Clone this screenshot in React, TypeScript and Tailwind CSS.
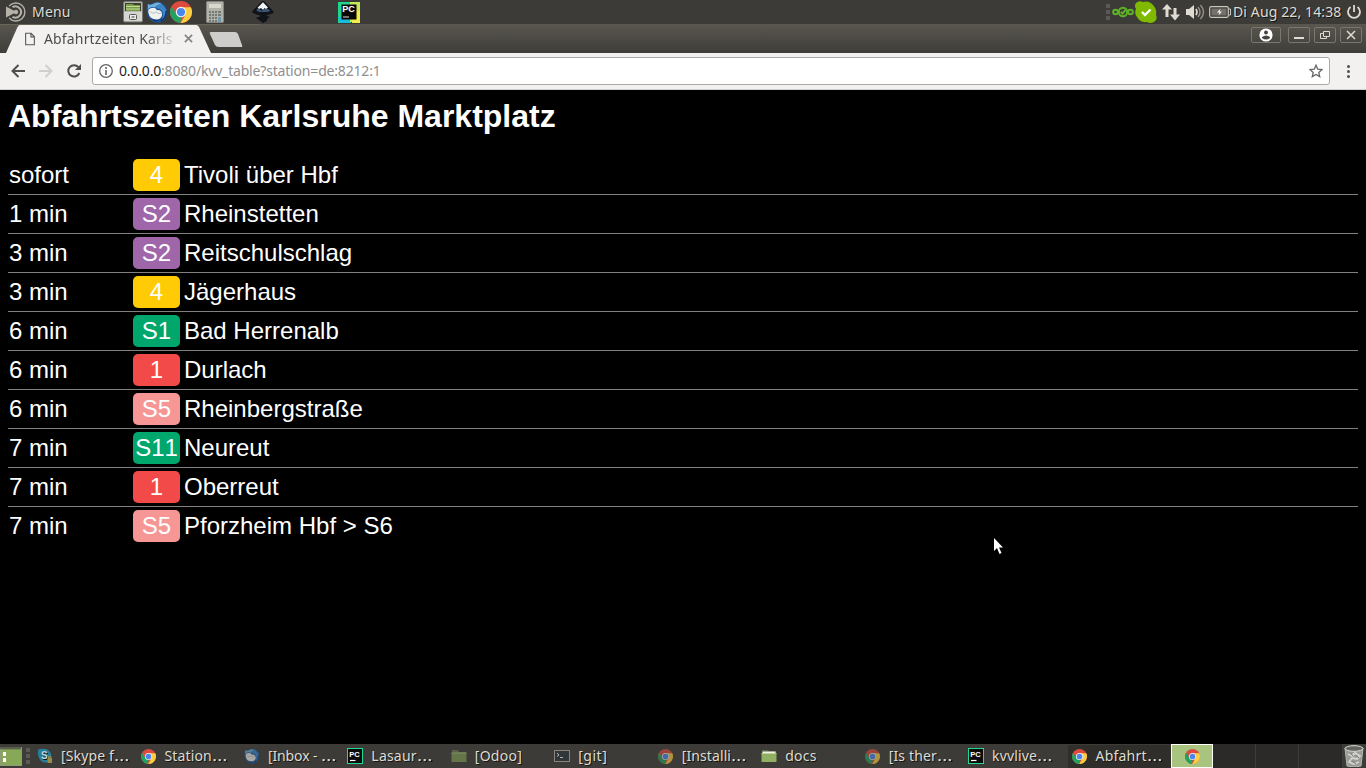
import React from "react";

const departures = [
  { time: "sofort", line: "4", color: "bg-[#ffcb05]", to: "Tivoli über Hbf" },
  { time: "1 min", line: "S2", color: "bg-[#a066aa]", to: "Rheinstetten" },
  { time: "3 min", line: "S2", color: "bg-[#a066aa]", to: "Reitschulschlag" },
  { time: "3 min", line: "4", color: "bg-[#ffcb05]", to: "Jägerhaus" },
  { time: "6 min", line: "S1", color: "bg-[#00a76d]", to: "Bad Herrenalb" },
  { time: "6 min", line: "1", color: "bg-[#f14a48]", to: "Durlach" },
  { time: "6 min", line: "S5", color: "bg-[#f69795]", to: "Rheinbergstraße" },
  { time: "7 min", line: "S11", color: "bg-[#00a76d] [font-kerning:none]", to: "Neureut" },
  { time: "7 min", line: "1", color: "bg-[#f14a48]", to: "Oberreut" },
  { time: "7 min", line: "S5", color: "bg-[#f69795]", to: "Pforzheim Hbf > S6" },
];

function Chrome({ className = "" }: { className?: string }) {
  return (
    <svg viewBox="0 0 24 24" className={className}>
      <circle cx="12" cy="12" r="12" fill="#dd4b3e" />
      <path d="M1.6 6L7.2 14.8L12 17.2L11.5 24A12 12 0 0 1 1.6 6Z" fill="#22a15f" />
      <path d="M12 6.7H22.8A12 12 0 0 1 11.5 24L17 14.6Z" fill="#fdce41" />
      <circle cx="12" cy="12" r="5.7" fill="#f4f4f4" />
      <circle cx="12" cy="12" r="4.5" fill="#4a86ee" />
    </svg>
  );
}

function PyCharm() {
  return (
    <svg viewBox="0 0 16 16" className="h-4 w-4">
      <rect width="16" height="16" fill="#20d995" />
      <rect x="1" y="1" width="14" height="14" fill="#0b0b0d" />
      <text x="2.3" y="8.6" fontSize="7.5" fontWeight="700" fill="#fff" fontFamily="Liberation Sans, sans-serif">PC</text>
      <path d="M3 12.5h5.5" stroke="#fff" strokeWidth="1.2" />
    </svg>
  );
}

function Thunderbird({ className = "" }: { className?: string }) {
  return (
    <svg viewBox="0 0 24 24" className={className}>
      <path d="M2 3Q4 4 6 3Q11 0 17 2Q23 5 23 12Q23 20 17 23Q12 25 7 22Q1 18 1 12Q0 7 2 3Z" fill="#1c5296" />
      <path d="M2 3Q4 5 8 3Q14 0 18 4Q12 3 10 7Q5 5 2 10Z" fill="#6fb0dc" />
      <path d="M11 6Q14 2 19 5Q23 9 22 15Q20 21 17 21Q20 14 17 10Q15 8 11 8Z" fill="#3d86c6" />
      <path d="M3 14Q1 10 5 8Q10 6 12 10Q15 9 17 12Q19 17 14 20Q8 21 5 18Q3 16 3 14Z" fill="#f1f1ee" />
      <path d="M4 11Q7 15 11 12Q14 15 17 13" fill="none" stroke="#aab6c2" />
      <path d="M5 18Q9 22 15 20Q13 23 9 22Z" fill="#123a78" />
      <path d="M22 11Q22 19 16 22" fill="none" stroke="#102f66" strokeWidth="1.5" />
    </svg>
  );
}

function Folder() {
  return (
    <svg viewBox="0 0 16 16" className="h-4 w-4">
      <path d="M1 2h6l1 1h7v4H1z" fill="#58664a" />
      <path d="M1.5 3.5h13v3h-13z" fill="#f2f2e9" />
      <path d="M.5 5.5h15V14H.5z" fill="#91b064" />
      <path d="M.5 5.5h15" stroke="#b9d392" />
    </svg>
  );
}

function DimFolder() {
  return (
    <svg viewBox="0 0 16 16" className="h-4 w-4">
      <path d="M1 2h6l1 2h7v10H1z" fill="#59614c" />
      <path d="M.5 5h15v9H.5z" fill="#647548" />
      <path d="M.5 5h15" stroke="#849265" />
    </svg>
  );
}

function Terminal() {
  return (
    <svg viewBox="0 0 16 16" className="h-4 w-4">
      <rect x=".5" y="2.5" width="15" height="11" fill="#30363a" stroke="#85857e" />
      <path d="M3 5l2 2-2 1.5M6 9.5h3" fill="none" stroke="#b4b4ae" />
    </svg>
  );
}

function SkypeSmall() {
  return (
    <svg viewBox="0 0 16 16" className="h-4 w-4">
      <path d="M1 3Q1 0 5 1Q10 0 13 4Q15 6 14 9Q16 15 11 14Q5 16 2 10Q0 6 1 3Z" fill="#267e9b" />
      <text x="4" y="11" fontSize="10" fontWeight="700" fill="#b8d5dc" fontFamily="Liberation Sans, sans-serif">S</text>
      <path d="M10.5 10h4.5v5h-4.5z" fill="#9c8a48" />
      <path d="M11.5 10V8.5h2.5V10" fill="none" stroke="#9c8a48" />
    </svg>
  );
}

const tasks = [
  { label: "[Skype f", cut: true, icon: <SkypeSmall />, style: "tracking-[0.15px]" },
  { label: "Station", cut: true, icon: <Chrome className="h-[15px] w-[15px]" />, style: "tracking-[0.15px]" },
  { label: "[Inbox - ", cut: true, icon: <Thunderbird className="h-4 w-4 opacity-60" />, style: "tracking-[-0.1px]" },
  { label: "Lasaur", cut: true, icon: <PyCharm />, style: "tracking-[0.2px]" },
  { label: "[Odoo]", icon: <DimFolder />, style: "tracking-[0.25px]" },
  { label: "[git]", icon: <Terminal />, style: "tracking-[0.5px]" },
  { label: "[Installi", cut: true, icon: <Chrome className="h-[15px] w-[15px] opacity-60" />, style: "tracking-[0.1px]" },
  { label: "docs", icon: <Folder />, style: "tracking-[0.3px]" },
  { label: "[Is ther", cut: true, icon: <Chrome className="h-[15px] w-[15px] opacity-60" />, style: "tracking-[0.15px]" },
  { label: "kvvlive", cut: true, icon: <PyCharm />, style: "tracking-[0.15px]" },
  { label: "Abfahrt", cut: true, icon: <Chrome className="h-[15px] w-[15px]" />, style: "tracking-[0.2px]", active: true },
];

function Grip() {
  return (
    <div className="flex w-1 flex-col gap-[2px]">
      <span className="h-1 bg-[#5a5955]" />
      <span className="h-1 bg-[#5a5955]" />
      <span className="h-1 bg-[#5a5955]" />
    </div>
  );
}

function TopPanel() {
  return (
    <header className="flex h-6 items-center bg-[#3c3b37] text-[14px] text-[#dfdbd2] [text-shadow:1px_1px_#171613]">
      <svg viewBox="0 0 20 20" className="ml-[6px] h-5 w-5 shrink-0" fill="none" stroke="#b5b2aa">
        <path d="M3.2 4A9 9 0 1 1 3.2 16" strokeWidth="1.4" />
        <path d="M6.5 5.2A5.6 5.6 0 1 1 6.5 14.8" strokeWidth="2" />
        <path d="M0 4.5L10.5 10L0 15.5Z" fill="#b5b2aa" stroke="none" />
        <circle cx="10" cy="10" r="2.2" fill="#b5b2aa" stroke="none" />
      </svg>
      <span className="ml-[6px] w-[91px] shrink-0 pb-[2px] tracking-[0.2px]">Menu</span>
      <svg viewBox="0 0 20 22" className="h-[22px] w-5 shrink-0">
        <rect x=".5" y=".5" width="19" height="20.5" rx="1.5" fill="#b8b8b3" stroke="#777774" />
        <path d="M2 2h16v8H2z" fill="#3b4030" />
        <path d="M3 3h7l1 1h6v6H3z" fill="#779c43" />
        <path d="M3 5.5h14M3 8h14" stroke="#c9d9a0" />
        <path d="M1 11h18v9H1z" fill="#d5d5d1" />
        <rect x="6.5" y="13.5" width="7" height="5" rx="1" fill="#eee" stroke="#555" />
        <path d="M8.5 16h3" stroke="#333" />
      </svg>
      <Thunderbird className="ml-[3px] h-[22px] w-[22px] shrink-0" />
      <Chrome className="ml-[2px] h-[22px] w-[22px] shrink-0" />
      <svg viewBox="0 0 18 22" className="ml-[14px] h-[22px] w-[18px] shrink-0">
        <rect x=".5" y=".5" width="17" height="21" rx="1" fill="#b2b2aa" stroke="#868681" />
        <path d="M3 3h12v4H3z" fill="#d7d9ce" />
        <path d="M3 11h2m1 0h2m1 0h2m1 0h3M3 14h2m1 0h2m1 0h2m1 0h3M3 17h2m1 0h2m1 0h2m1 0h3M3 20h2m1 0h2m1 0h2" stroke="#717a74" strokeWidth="2" />
        <path d="M13.5 16v5" stroke="#6e99aa" strokeWidth="3" />
      </svg>
      <svg viewBox="0 0 22 22" className="ml-[28px] h-[22px] w-[22px] shrink-0">
        <path d="M11 0Q12 0 13 1L21 10Q23 12 19 13L14 14.5L18 16L15 18L15 20L11 22L7 19L4 17L9 15L2 12.5Q-1 11 1 9.5L9 1Q10 0 11 0Z" fill="#10131a" />
        <path d="M11 1.2L16 6.5L14 8L12.5 7L11 9L9 7L7 8L5.5 6.8Z" fill="#f0f3f5" />
        <path d="M4 9L6 7.5L8 8.5L10 10L12 8L16 8L18.5 10L15 11H7Z" fill="#3c5475" />
      </svg>
      <svg viewBox="0 0 22 22" className="ml-[64px] h-[22px] w-[22px] shrink-0">
        <path d="M0 1h13v21H0z" fill="#20d68f" />
        <path d="M12 1h10v20H12z" fill="#c5e957" />
        <path d="M0 16h12v6H2z" fill="#17bce0" />
        <path d="M14 10h8v12h-8z" fill="#f3ed49" />
        <rect x="3.5" y="3.5" width="15" height="15" fill="#080808" />
        <text x="4.3" y="11.4" fontSize="9" fontWeight="700" fill="#fff" fontFamily="Liberation Sans, sans-serif">PC</text>
        <path d="M5 16h6" stroke="#ddd" />
      </svg>
      <div className="flex-1" />
      <div className="flex shrink-0 items-center">
        <Grip />
        <svg viewBox="0 0 22 12" className="ml-[2px] h-3 w-[22px]" fill="none" stroke="#5fb426" strokeWidth="2">
          <circle cx="3.5" cy="6" r="2.3" />
          <circle cx="18.5" cy="6" r="2.3" />
          <circle cx="11" cy="6" r="4.2" />
          <path d="M8.8 6l1.7 1.6L13.5 4" />
        </svg>
        <svg viewBox="0 0 22 22" className="ml-[1px] h-[22px] w-[22px]">
          <path d="M1 2Q4-1 8 1Q14-1 18 4Q22 8 21 14Q23 19 19 21Q15 23 12 21Q5 22 2 16Q-1 12 1 8Q-1 5 1 2Z" fill="#7fba00" />
          <path d="M7 11l3 3 5.5-5.5" stroke="#fff" strokeWidth="2.4" fill="none" />
        </svg>
        <svg viewBox="0 0 18 18" className="ml-[5px] h-[18px] w-[18px]" fill="#dfdbd2">
          <path d="M5 1L0 6.5h3.5V14h3V6.5H10zM11.5 5v6.5H8l5 6 5-6h-3.5V5z" />
        </svg>
        <svg viewBox="0 0 20 18" className="ml-[5px] h-[18px] w-5" fill="none" stroke="#dfdbd2">
          <path d="M1 6h3l5-4v14l-5-4H1z" fill="#dfdbd2" stroke="none" />
          <path d="M11 6q2 3 0 6" strokeWidth="1.6" />
          <path d="M13 4q4 5 0 10M15.5 2q6 7 0 14" stroke="#8f8c85" strokeWidth="1.5" />
        </svg>
        <svg viewBox="0 0 22 12" className="ml-1 h-3 w-[22px]">
          <rect x=".7" y=".7" width="18.6" height="10.6" rx="1.5" fill="none" stroke="#cbc7bf" strokeWidth="1.2" />
          <rect x="2.5" y="2.5" width="15" height="7" fill="#74716b" />
          <path d="M20 3h1.5v6H20" fill="none" stroke="#cbc7bf" />
          <path d="M11.5 2.5L8 6.5h2.3L9.5 9.5 13 5.5h-2.3z" fill="#eee" />
        </svg>
        <span className="ml-[2px] w-[113px] pb-[2px] tracking-[0.12px] whitespace-nowrap">Di Aug 22, 14:38</span>
        <svg viewBox="0 0 16 16" className="mr-[4px] h-4 w-4" fill="none" stroke="#dfdbd2" strokeWidth="1.8">
          <path d="M4.5 3A6 6 0 1 0 11.5 3M8 1v7" />
        </svg>
      </div>
    </header>
  );
}

function TabStrip() {
  return (
    <div className="relative flex h-[29px] items-start bg-linear-to-b from-[#59574e] to-[#3e3d39]">
      <svg viewBox="0 0 260 29" className="absolute top-0 left-0 h-[29px] w-[260px]">
        <path d="M0 .5H260" stroke="#686558" />
        <path d="M6 29L17.5 3Q18.5 1 20 1H196Q198 1 199 3L211 29Z" fill="#f2f1f0" />
        <path d="M211 8H235Q237 8 238 10L242 21Q243 23 241 23H219Q216 23 215 21L210 10Q209 8 211 8Z" fill="#cecdcb" />
      </svg>
      <div className="relative flex h-[29px] w-[200px] shrink-0 items-center pl-[25px]">
        <svg viewBox="0 0 11 14" className="h-[14px] w-[10px] shrink-0" fill="none" stroke="#5a5a5a" strokeWidth="1.2">
          <path d="M.7.7h6L10.3 4.3v9H.7zM6.5.7v4h4" />
        </svg>
        <div className="ml-[9px] w-[134px] pb-px text-[14px] tracking-[0.15px] whitespace-nowrap text-[#4c4c4c] mask-[linear-gradient(to_right,#000_76%,transparent_101%)]">Abfahrtzeiten Karls</div>
        <svg viewBox="0 0 10 10" className="ml-[6px] h-[9px] w-[9px] shrink-0" stroke="#858585" strokeWidth="1.9">
          <path d="M1 1l8 8M9 1L1 9" />
        </svg>
      </div>
      <div className="flex-1" />
      <div className="relative mt-[3px] mr-1 flex gap-1">
        <div className="mr-[3px] flex h-4 w-[30px] items-center justify-center rounded-[2px] border border-[#79776e]">
          <svg viewBox="0 0 14 14" className="h-[14px] w-[14px]">
            <circle cx="7" cy="7" r="6.6" fill="#fff" />
            <circle cx="7" cy="4.5" r="2" fill="#464540" />
            <path d="M3 9q4-3 8 0v1q-4 3-8 0z" fill="#464540" />
          </svg>
        </div>
        <div className="flex h-4 w-[22px] items-end justify-center rounded-[2px] border border-[#79776e] pb-[3px]">
          <span className="h-[2px] w-[10px] bg-[#dfdbd2]" />
        </div>
        <div className="flex h-4 w-[22px] items-center justify-center rounded-[2px] border border-[#79776e]">
          <svg viewBox="0 0 10 8" className="h-2 w-[10px]" fill="none" stroke="#dfdbd2">
            <path d="M3.5.5h6v5h-6zM3 2.5H.5v5h6V6" />
          </svg>
        </div>
        <div className="flex h-4 w-[22px] items-center justify-center rounded-[2px] border border-[#79776e]">
          <svg viewBox="0 0 10 10" className="h-[10px] w-[10px]" stroke="#dfdbd2" strokeWidth="1.5">
            <path d="M1 1l8 8M9 1L1 9" />
          </svg>
        </div>
      </div>
    </div>
  );
}

function Toolbar() {
  return (
    <div className="flex h-[37px] items-center border-b border-[#d0cfce] bg-[#f2f1f0]">
      <svg viewBox="0 0 14 14" className="ml-[11px] h-[14px] w-[14px] shrink-0" fill="none" stroke="#4f4f4f" strokeWidth="2">
        <path d="M14 7H1.5M7.5 1L1.5 7l6 6" />
      </svg>
      <svg viewBox="0 0 14 14" className="ml-[14px] h-[14px] w-[14px] shrink-0" fill="none" stroke="#cfcfce" strokeWidth="2">
        <path d="M0 7h12.5M6.5 1l6 6-6 6" />
      </svg>
      <svg viewBox="0 0 14 14" className="ml-[14px] h-[14px] w-[14px] shrink-0" fill="none" stroke="#4f4f4f" strokeWidth="2">
        <path d="M12.3 9A5.7 5.7 0 1 1 11.4 3.2" />
        <path d="M14 0v6H8z" fill="#4f4f4f" stroke="none" />
      </svg>
      <div className="ml-[11px] flex h-7 w-[1238px] shrink-0 items-center rounded-[3px] border border-[#aaa9a8] bg-white">
        <svg viewBox="0 0 14 14" className="ml-[6px] h-[14px] w-[14px]" fill="none" stroke="#646464">
          <circle cx="7" cy="7" r="6.3" strokeWidth="1.3" />
          <path d="M7 6v5M7 3v2" strokeWidth="1.6" />
        </svg>
        <div className="ml-[6px] flex-1 pb-[2px] text-[14px] tracking-[-0.18px] whitespace-nowrap text-[#8f8f8f]">
          <span className="text-[#262626]">0.0.0.0</span>:8080/kvv_table?station=de:8212:1
        </div>
        <svg viewBox="0 0 14 14" className="mr-[6px] h-[14px] w-[14px]" fill="none" stroke="#686868" strokeWidth="1.3">
          <path d="M7 1.2l1.7 3.9 4.3.4-3.2 2.9.9 4.2L7 10.4l-3.7 2.2.9-4.2L1 5.5l4.3-.4z" />
        </svg>
      </div>
      <div className="ml-[17px] flex flex-col gap-[2px]">
        <span className="h-[3px] w-[3px] rounded-full bg-[#505050]" />
        <span className="h-[3px] w-[3px] rounded-full bg-[#505050]" />
        <span className="h-[3px] w-[3px] rounded-full bg-[#505050]" />
      </div>
    </div>
  );
}

function Taskbar() {
  return (
    <footer className="flex h-6 items-center bg-[#3c3b37] text-[14px] text-[#dfdbd2] [text-shadow:1px_1px_#171613]">
      <svg viewBox="0 0 22 19" className="h-[19px] w-[22px] shrink-0">
        <rect x=".5" y=".5" width="21" height="18" fill="#719048" stroke="#8e9a78" />
        <path d="M0 0h21v2H0z" fill="#5b5d50" />
        <path d="M1 3h20v15H1z" fill="#86a857" />
        <path d="M3 5h3v4H3zM3 11h3v4H3z" fill="#fff" />
      </svg>
      <div className="ml-1 w-[7px] shrink-0"><Grip /></div>
      <div className="grid w-[1138px] shrink-0 grid-cols-11">
        {tasks.map((task) => (
          <div key={task.label} className={`flex h-[23px] items-center gap-2 rounded-[2px] pl-1 ${task.active ? "bg-[#2f2e2b]" : ""}`}>
            <span className="flex w-4 shrink-0 justify-center">{task.icon}</span>
            <span className={`pb-[2px] whitespace-pre ${task.style}`}>
              {task.label}
              {task.cut && <span className="inline-block origin-left scale-x-[1.4]">…</span>}
            </span>
          </div>
        ))}
      </div>
      <div className="flex h-6 w-[42px] shrink-0 items-center justify-center border border-white bg-[#a9c47f]">
        <Chrome className="h-[15px] w-[15px]" />
      </div>
      <div className="grid h-6 w-[129px] shrink-0 grid-cols-3 divide-x divide-[#3c3b37] bg-[#2b2a28]">
        <span /><span /><span />
      </div>
      <svg viewBox="0 0 20 22" className="ml-[2px] h-[22px] w-5 shrink-0">
        <path d="M1 3Q10-1 19 3L17 21Q10 23 3 21Z" fill="#999b98" stroke="#b4b6b1" />
        <ellipse cx="10" cy="3.5" rx="9" ry="2.8" fill="#62645f" stroke="#d8d9d6" />
        <path d="M4 9l4 2 3-3 5 3-3 3-5-1-3 4 5 2 5-2" stroke="#d3d4cf" fill="none" strokeWidth="1.8" />
        <path d="M6 8l3 3M12 10l3 3M8 16l4 3" stroke="#7b7d79" />
      </svg>
    </footer>
  );
}

export default function App() {
  return (
    <div className="relative flex h-[768px] w-[1366px] flex-col overflow-hidden bg-black font-['Noto_Sans',sans-serif]">
      <TopPanel />
      <TabStrip />
      <Toolbar />
      <main className="flex-1 px-2 font-['Liberation_Sans',sans-serif] text-white">
        <h1 className="pt-2 text-[32px] leading-9 font-bold">Abfahrtszeiten Karlsruhe Marktplatz</h1>
        <div className="mt-[22px] divide-y divide-[#808080] text-2xl leading-8">
          {departures.map((departure, index) => (
            <div key={index} className="flex h-[39px] items-start pt-[3px]">
              <span className="w-[125px] pl-px">{departure.time}</span>
              <span className={`h-8 w-[47px] rounded-[5px] text-center ${departure.color}`}>{departure.line}</span>
              <span className="ml-1">{departure.to}</span>
            </div>
          ))}
        </div>
      </main>
      <Taskbar />
      <svg viewBox="0 0 10 17" className="absolute top-[538px] left-[993px] h-[17px] w-[10px]">
        <path d="M1 0v13l3-3 2.5 6 2-1L6 9.5h4z" fill="#fff" />
      </svg>
    </div>
  );
}
